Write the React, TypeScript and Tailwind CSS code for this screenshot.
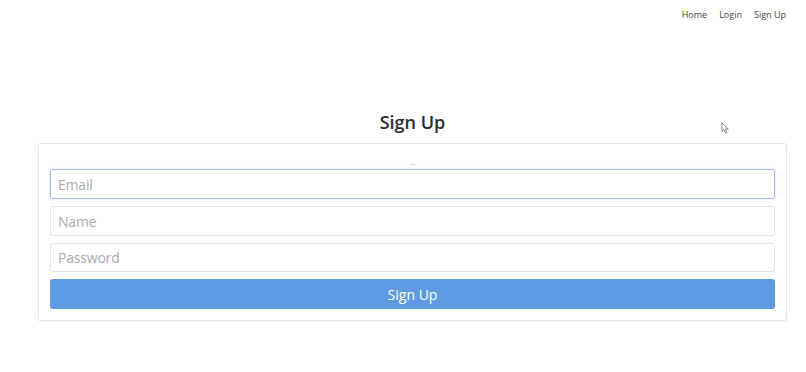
import React from "react";

export default function App() {
  return (
    <div className="relative min-h-[372px] w-full bg-white font-['Open_Sans',sans-serif] text-[#333]">
      <nav className="flex justify-end gap-[12px] pr-[20px] pt-[8px] text-[9px] leading-[14px] text-[#444]">
        <span>Home</span>
        <span>Login</span>
        <span>Sign Up</span>
      </nav>

      <div className="ml-[38px] mr-[19px] pt-[86px]">
        <h1 className="text-center text-[18px] font-semibold leading-[28px] text-[#2b2b2b]">Sign Up</h1>

        <div className="mt-[7px] rounded-[3px] border border-[#e6e6e6] bg-white px-[11px] pb-[11px] pt-[11px] shadow-[0_1px_2px_rgba(0,0,0,0.05)]">
          <div className="text-center text-[8px] leading-[14px] text-[#999]">...</div>
          <form className="flex flex-col gap-[7px]">
            <input
              placeholder="Email"
              className="h-[30px] w-full rounded-[3px] border border-[#a9b9e6] px-[7px] text-[14px] tracking-[-0.2px] outline-none shadow-[0_0_2px_rgba(100,130,220,0.45)] placeholder:text-[#aaa]"
            />
            <input
              placeholder="Name"
              className="h-[30px] w-full rounded-[3px] border border-[#e3e3e3] px-[7px] text-[14px] tracking-[-0.2px] outline-none placeholder:text-[#aaa]"
            />
            <input
              type="password"
              placeholder="Password"
              className="h-[29px] w-full rounded-[3px] border border-[#e3e3e3] px-[7px] text-[14px] tracking-[-0.2px] outline-none placeholder:text-[#aaa]"
            />
            <button
              type="button"
              className="h-[30px] w-full rounded-[3px] bg-[#5e9be3] text-[14px] text-white"
            >
              Sign Up
            </button>
          </form>
        </div>
      </div>

      <svg className="absolute left-[721px] top-[122px]" width="9" height="12" viewBox="0 0 9 12">
        <path d="M1 1 L1 9.5 L3 7.6 L4.6 11 L6 10.3 L4.5 7.1 L7.3 7.1 Z" fill="#fff" stroke="#777" strokeWidth="0.9" strokeLinejoin="round" />
      </svg>
    </div>
  );
}
